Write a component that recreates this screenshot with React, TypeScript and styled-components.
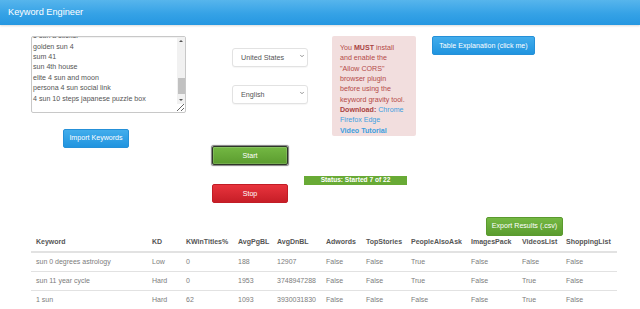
import React, { useEffect, useRef } from "react";
import styled, { createGlobalStyle } from "styled-components";
import { ChevronDown } from "lucide-react";

const Global = createGlobalStyle`
  html, body { margin: 0; padding: 0; overflow: hidden; background: #fff; }
  body { font-family: "Liberation Sans", Arial, sans-serif; }
  * { box-sizing: border-box; }
`;

const Header = styled.header`
  height: 25px;
  background: linear-gradient(to bottom, #57b5ec 0%, #35a2e6 55%, #2597e1 100%);
  color: #fff;
  font-size: 9.2px;
  line-height: 25px;
  padding-left: 8px;
  box-shadow: 0 1px 2px rgba(0, 0, 0, 0.15);
`;

const TopSection = styled.section`
  display: flex;
  align-items: flex-start;
  padding-left: 31px;
  margin-top: 11px;
  height: 110px;
`;

const Column = styled.div<{ $ml?: number; $w: number; $pt?: number; $gap?: number }>`
  display: flex;
  flex-direction: column;
  margin-left: ${(p) => p.$ml ?? 0}px;
  width: ${(p) => p.$w}px;
  padding-top: ${(p) => p.$pt ?? 0}px;
  gap: ${(p) => p.$gap ?? 0}px;
  flex: none;
`;

const AreaWrap = styled.div`
  position: relative;
  width: 155px;
  height: 77px;
`;

const KeywordArea = styled.textarea`
  display: block;
  width: 100%;
  height: 100%;
  border: 1px solid #c8c8c8;
  border-radius: 2px;
  font-family: "Liberation Sans", Arial, sans-serif;
  font-size: 7.1px;
  line-height: 10.4px;
  color: #555;
  padding: 2px 10px 2px 1px;
  margin: 0;
  resize: both;
  overflow: hidden;
  box-shadow: inset 0 1px 1px rgba(0, 0, 0, 0.06);
`;

const ScrollTrack = styled.div`
  position: absolute;
  top: 1px;
  right: 1px;
  bottom: 9px;
  width: 8px;
  background: #f1f1f1;
  pointer-events: none;
`;

const Arrow = styled.span<{ $dir: "up" | "down" }>`
  position: absolute;
  left: 2px;
  ${(p) => (p.$dir === "up" ? "top: 3px;" : "bottom: 3px;")}
  width: 0;
  height: 0;
  border-left: 2px solid transparent;
  border-right: 2px solid transparent;
  ${(p) => (p.$dir === "up" ? "border-bottom: 2.5px solid #555;" : "border-top: 2.5px solid #555;")}
`;

const Thumb = styled.span`
  position: absolute;
  left: 0.5px;
  right: 0.5px;
  top: 41px;
  height: 16px;
  background: #c1c1c1;
`;

const Button = styled.button<{ $variant: "blue" | "green" | "red"; $w: number; $h?: number; $focus?: boolean }>`
  width: ${(p) => p.$w}px;
  height: ${(p) => p.$h ?? 19}px;
  padding: 0;
  margin: 0;
  font-family: "Liberation Sans", Arial, sans-serif;
  font-size: 7.1px;
  color: #fff;
  border-radius: 2px;
  cursor: pointer;
  flex: none;
  background: ${(p) =>
    p.$variant === "blue"
      ? "linear-gradient(to bottom, #42adec, #2094df)"
      : p.$variant === "green"
      ? "linear-gradient(to bottom, #74b843, #5b9c2f)"
      : "linear-gradient(to bottom, #e8343d, #c71e27)"};
  border: 1px solid
    ${(p) =>
      p.$focus
        ? "#2e3528"
        : p.$variant === "blue"
        ? "#2590d8"
        : p.$variant === "green"
        ? "#5a9a2e"
        : "#c21d26"};
  box-shadow: ${(p) => (p.$focus ? "0 0 1px 0.5px rgba(0,0,0,0.5), inset 0 0 0 1px rgba(255,255,255,0.15)" : "none")};
`;

const ImportWrap = styled.div`
  margin-top: 13px;
  padding-left: 32px;
`;

const SelectWrap = styled.div`
  position: relative;
  width: 76px;
  height: 19px;
`;

const Select = styled.select`
  appearance: none;
  width: 100%;
  height: 100%;
  border: 1px solid #e2e2e2;
  border-radius: 3px;
  background: #fff;
  font-family: "Liberation Sans", Arial, sans-serif;
  font-size: 7.2px;
  color: #555;
  padding: 0 0 0 8px;
  margin: 0;
  box-shadow: 0 1px 1px rgba(0, 0, 0, 0.04);
`;

const Chevron = styled(ChevronDown)`
  position: absolute;
  right: 3px;
  top: 7px;
  width: 6px;
  height: 6px;
  color: #555;
  pointer-events: none;
`;

const Alert = styled.div`
  width: 84px;
  height: 100px;
  overflow: hidden;
  background: #f2dede;
  border-radius: 2px;
  color: #b44a48;
  font-size: 7.1px;
  line-height: 10.35px;
  padding: 7px 0 0 8px;
  b { font-weight: bold; color: #a94442; }
`;

const Link = styled.a<{ $bold?: boolean }>`
  color: #3d9ee0;
  font-weight: ${(p) => (p.$bold ? "bold" : "normal")};
  text-decoration: none;
`;

const ControlSection = styled.section`
  display: flex;
  align-items: flex-start;
  padding-left: 212px;
  height: 68px;
`;

const Status = styled.div`
  margin-left: 16px;
  margin-top: 30px;
  width: 103px;
  height: 8.5px;
  background: #68aa35;
  color: #fff;
  font-weight: bold;
  font-size: 6.6px;
  line-height: 8.5px;
  text-align: center;
  white-space: nowrap;
`;

const ExportRow = styled.div`
  padding-left: 486px;
  height: 19px;
`;

const Table = styled.table`
  margin-left: 31px;
  width: 586px;
  border-collapse: collapse;
  table-layout: fixed;
  font-size: 7px;
  line-height: 10px;
  th {
    text-align: left;
    color: #555;
    font-weight: bold;
    padding: 4px 5px;
    border-bottom: 2px solid #e2e2e2;
    white-space: nowrap;
  }
  td {
    color: #7c7c7c;
    padding: 4px 5px;
    border-top: 1px solid #e2e2e2;
    white-space: nowrap;
  }
`;

const columns: [string, number][] = [
  ["Keyword", 116],
  ["KD", 34],
  ["KWinTitles%", 52],
  ["AvgPgBL", 39],
  ["AvgDnBL", 49],
  ["Adwords", 40],
  ["TopStories", 45],
  ["PeopleAlsoAsk", 60],
  ["ImagesPack", 51],
  ["VideosList", 44],
  ["ShoppingList", 56],
];

const rows = [
  ["sun 0 degrees astrology", "Low", "0", "188", "12907", "False", "False", "True", "False", "False", "False"],
  ["sun 11 year cycle", "Hard", "0", "1953", "3748947288", "False", "False", "True", "False", "True", "False"],
  ["1 sun", "Hard", "62", "1093", "3930031830", "False", "False", "False", "False", "True", "False"],
];

const keywords = [
  "sun 0 degrees astrology",
  "sun 11 year cycle",
  "1 sun",
  "2 suns",
  "3 sun",
  "sun 1 hour",
  "sun 24 hours",
  "sun 3 boxes",
  "5 sun a sticker",
  "golden sun 4",
  "sum 41",
  "sun 4th house",
  "elite 4 sun and moon",
  "persona 4 sun social link",
  "4 sun 10 steps japanese puzzle box",
  "",
  "",
  "",
  "",
  "",
  "",
  "",
].join("\n");

export default function App() {
  const ref = useRef<HTMLTextAreaElement>(null);
  useEffect(() => {
    if (ref.current) ref.current.scrollTop = 91;
  }, []);
  return (
    <>
      <Global />
      <Header>Keyword Engineer</Header>
      <TopSection>
        <Column $w={155}>
          <AreaWrap>
            <KeywordArea ref={ref} defaultValue={keywords} spellCheck={false} />
            <ScrollTrack>
              <Arrow $dir="up" />
              <Thumb />
              <Arrow $dir="down" />
            </ScrollTrack>
          </AreaWrap>
          <ImportWrap>
            <Button $variant="blue" $w={66}>Import Keywords</Button>
          </ImportWrap>
        </Column>
        <Column $ml={46} $w={76} $pt={10} $gap={18}>
          <SelectWrap>
            <Select defaultValue="us">
              <option value="us">United States</option>
            </Select>
            <Chevron strokeWidth={2.5} />
          </SelectWrap>
          <SelectWrap>
            <Select defaultValue="en">
              <option value="en">English</option>
            </Select>
            <Chevron strokeWidth={2.5} />
          </SelectWrap>
        </Column>
        <Column $ml={24} $w={84}>
          <Alert>
            You <b>MUST</b> install
            <br />
            and enable the
            <br />
            "Allow CORS"
            <br />
            browser plugin
            <br />
            before using the
            <br />
            keyword gravity tool.
            <br />
            <b>Download:</b> <Link href="#">Chrome</Link>
            <br />
            <Link href="#">Firefox</Link> <Link href="#">Edge</Link>
            <br />
            <Link href="#" $bold>Video Tutorial</Link>
          </Alert>
        </Column>
        <Column $ml={16} $w={103}>
          <Button $variant="blue" $w={103}>Table Explanation (click me)</Button>
        </Column>
      </TopSection>
      <ControlSection>
        <Column $w={76} $gap={19}>
          <Button $variant="green" $w={76} $focus>Start</Button>
          <Button $variant="red" $w={76}>Stop</Button>
        </Column>
        <Status>Status: Started 7 of 22</Status>
      </ControlSection>
      <ExportRow>
        <Button $variant="green" $w={77}>Export Results (.csv)</Button>
      </ExportRow>
      <Table>
        <colgroup>
          {columns.map(([name, w]) => (
            <col key={name} style={{ width: w }} />
          ))}
        </colgroup>
        <thead>
          <tr>
            {columns.map(([name]) => (
              <th key={name}>{name}</th>
            ))}
          </tr>
        </thead>
        <tbody>
          {rows.map((r) => (
            <tr key={r[0]}>
              {r.map((c, i) => (
                <td key={i}>{c}</td>
              ))}
            </tr>
          ))}
        </tbody>
      </Table>
    </>
  );
}
